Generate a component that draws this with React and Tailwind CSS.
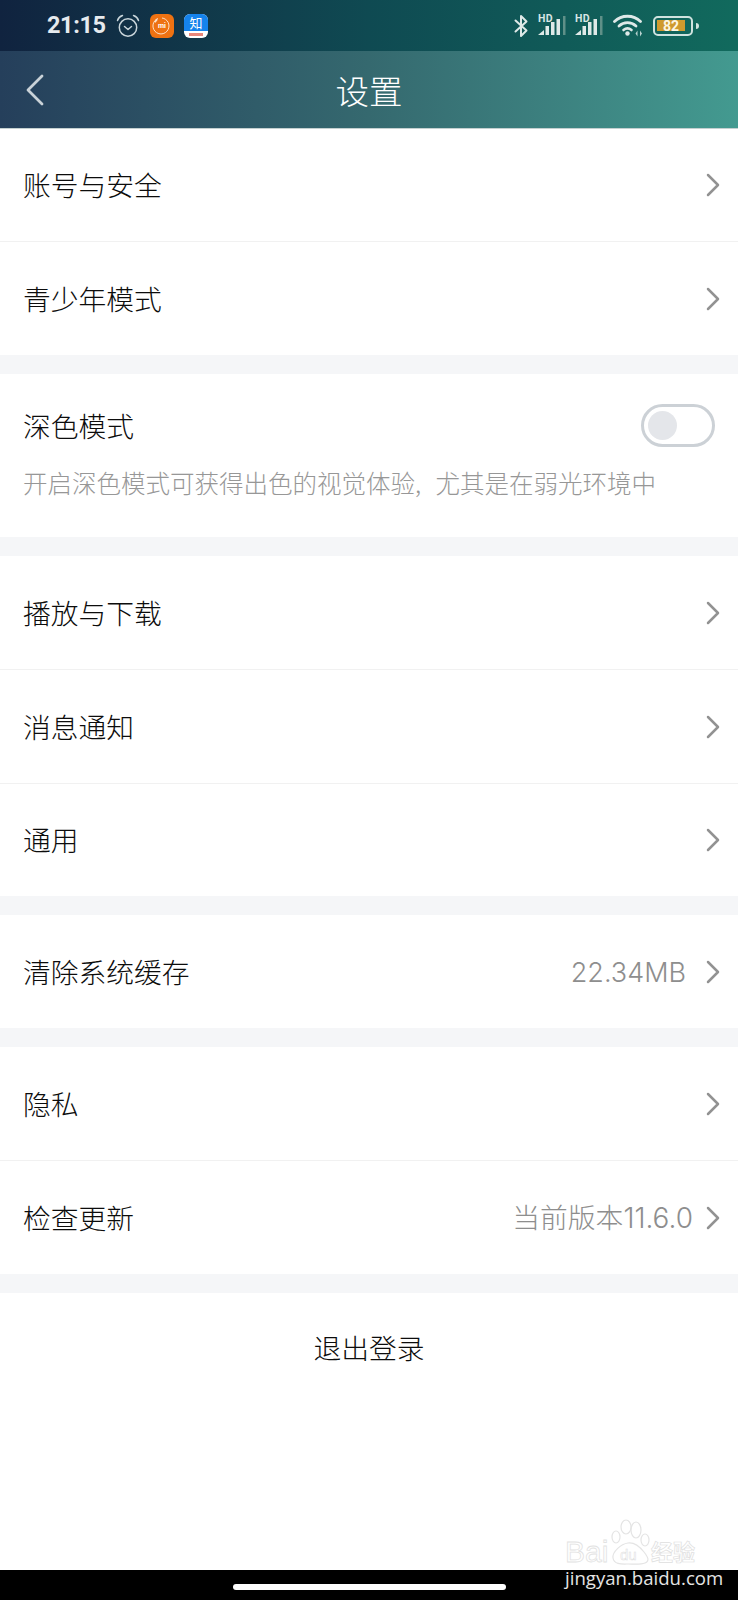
import React from 'react'

const CJK = "font-['Noto_Sans_CJK_SC','Noto_Sans',sans-serif]"
const LATIN = "font-['Inter',sans-serif] font-light"

function Chevron() {
  return (
    <svg width="14" height="24" viewBox="0 0 14 24" fill="none" className="shrink-0">
      <path d="M2 2l10 10L2 22" stroke="#929292" strokeWidth="2.500" strokeLinecap="round" strokeLinejoin="round" />
    </svg>
  )
}

function Row({ label, value, last, className = 'h-[113px]' }) {
  return (
    <div className={`box-content flex items-center pl-[23px] pr-[18px] ${className} ${last ? '' : 'border-b border-[#f1f1f1]'}`}>
      <span className="text-[27.75px] text-[#0c0c0c] leading-none font-light">{label}</span>
      <span className="ml-auto flex items-center gap-[13px]">
        {value && <span className="text-[27.75px] text-[#8e8e8e] leading-none font-light">{value}</span>}
        <Chevron />
      </span>
    </div>
  )
}

function Gap() {
  return <div className="h-[19px] bg-[#f5f6f8]" />
}

function Signal() {
  return (
    <div className="relative w-[28px] h-[23px]">
      <span className="absolute left-0 top-0 text-[10.5px] leading-none font-bold tracking-[0.4px] text-[#d7e5e4] font-['Roboto',sans-serif]">HD</span>
      <svg width="28" height="23" viewBox="0 0 28 23" className="absolute left-0 top-0">
        <path d="M0 21l6-5v5z" fill="#dfe9e8" />
        <rect x="7.500" y="12" width="3.500" height="9" fill="#dfe9e8" />
        <rect x="13" y="8" width="3.500" height="13" fill="#dfe9e8" />
        <rect x="18.500" y="5" width="3.500" height="16" fill="#dfe9e8" />
        <rect x="25" y="2" width="2.500" height="19" fill="#5f9088" />
      </svg>
    </div>
  )
}

function StatusBar() {
  return (
    <div className="h-[51px] flex items-center pl-[47px] pr-[39px] bg-gradient-to-r from-[#10233f] via-[#0f4a52] to-[#116a5d]">
      <span className="w-[57px] text-[23.5px] font-bold leading-none tracking-[-0.4px] text-[#e6eaee] font-['Roboto',sans-serif] mt-[1px]">21:15</span>
      {/* alarm */}
      <svg width="24" height="24" viewBox="0 0 24 24" fill="none" className="ml-[12px] mt-[1px]" stroke="#c9d5da" strokeWidth="1.500" strokeLinecap="round" strokeLinejoin="round">
        <circle cx="12" cy="13.500" r="8.700" />
        <path d="M8.500 12.500l3.500 3 3.500-3" />
        <path d="M1.500 6.500C2.300 4 4 2.300 6.500 1.500M22.500 6.500C21.700 4 20 2.300 17.500 1.500" />
      </svg>
      {/* mi app */}
      <div className="relative ml-[10px] w-[24px] h-[24px] rounded-[6px] bg-[#ee7212] flex items-center justify-center mt-[1px]">
        <svg width="20" height="20" viewBox="0 0 20 20" fill="none" className="absolute left-[2px] top-[2px]" stroke="#fde3cb" strokeWidth="1">
          <path d="M6 2.500A8 8 0 1 0 10 2" />
          <path d="M2.800 6.200L5 3.200" strokeWidth="1.800" />
        </svg>
        <span className="text-[7px] font-bold leading-none text-white font-['Roboto',sans-serif]">mi</span>
      </div>
      {/* zhihu app */}
      <div className="relative ml-[10px] w-[24px] h-[24px] rounded-[6px] overflow-hidden bg-white mt-[1px]">
        <div className="h-[17px] bg-[#1583ec] flex items-center justify-center">
          <span className={`text-[13px] leading-none text-white ${CJK}`}>知</span>
        </div>
        <span className="absolute left-[5px] top-[19px] w-[14px] h-[3px] bg-[#e8867a]" />
      </div>

      <div className="ml-auto flex items-center">
        <svg width="14" height="24" viewBox="0 0 14 24" fill="none" stroke="#dfe9e8" strokeWidth="2" strokeLinejoin="round" strokeLinecap="round">
          <path d="M1.500 6.500l11 10L7 22V2l5.500 5.500-11 10" />
        </svg>
        <div className="ml-[10px]"><Signal /></div>
        <div className="ml-[9px]"><Signal /></div>
        <svg width="31" height="24" viewBox="0 0 31 24" fill="none" className="ml-[10px]">
          <path d="M1.500 7.500C8.500 .5 20.500 .5 27.500 7.500" stroke="#dfe9e8" strokeWidth="2.800" strokeLinecap="round" />
          <path d="M6 12c4.800-4.400 12.200-4.400 17 0" stroke="#dfe9e8" strokeWidth="2.800" strokeLinecap="round" />
          <path d="M10.500 16c2.400-2 5.600-2 8 0" stroke="#dfe9e8" strokeWidth="2.600" strokeLinecap="round" />
          <circle cx="14.500" cy="19.500" r="2.200" fill="#dfe9e8" />
          <path d="M24.500 16.500l-2 3 2 3zM27 16.500l2 3-2 3z" fill="#b9d3d0" />
        </svg>
        <div className="ml-[9px] w-[40px] h-[20px] rounded-[5px] border-[2.5px] border-[#cfe3df] flex items-center pl-[2px]">
          <div className="w-[28px] h-[11px] bg-[#cf9a2e] flex items-center justify-center">
            <span className="text-[14px] font-bold leading-none text-[#fdf6e3] font-['Roboto',sans-serif]">82</span>
          </div>
        </div>
        <span className="ml-[3px] w-[3px] h-[6px] rounded-r bg-[#cfe3df]" />
      </div>
    </div>
  )
}

function NavBar() {
  return (
    <div className="relative h-[78px] flex items-center justify-center bg-gradient-to-r from-[#253f5b] via-[#35696f] to-[#439a90] border-b border-[#c4d0d0] box-border">
      <svg width="18" height="32" viewBox="0 0 18 32" fill="none" className="absolute left-[26px] top-[23px]">
        <path d="M16 2L2 16l14 14" stroke="#c9d2d8" strokeWidth="2.800" strokeLinecap="round" strokeLinejoin="round" />
      </svg>
      <span className="text-[33.5px] leading-none text-white font-light">设置</span>
    </div>
  )
}

function Toggle() {
  return (
    <div className="w-[74px] h-[43px] rounded-full border-[3px] border-[#ccd1d6] bg-white flex items-center pl-[4px] shrink-0">
      <div className="w-[29px] h-[29px] rounded-full bg-[#e4e6ea]" />
    </div>
  )
}

function Watermark() {
  return (
    <div className="absolute left-[565px] top-[1518px] w-[170px] h-[76px] pointer-events-none">
      <svg width="42" height="48" viewBox="0 0 42 48" fill="none" stroke="#e4e4e4" strokeWidth="1.200" className="absolute left-[45px] top-0">
        <ellipse cx="6" cy="19" rx="4" ry="6" />
        <ellipse cx="16" cy="9" rx="5" ry="7" />
        <ellipse cx="26" cy="12" rx="5" ry="8" />
        <ellipse cx="35" cy="22" rx="4" ry="6" />
        <path d="M3 40c-1-6 8-14 15-15s12 4 16 9 6 9 1 11-12 1-17 1-14 1-15-6z" />
      </svg>
      <span className="absolute left-0 top-[19px] text-[30px] leading-none text-white font-['Liberation_Sans',sans-serif] [-webkit-text-stroke:0.8px_#e2e2e2]">Bai</span>
      <span className="absolute left-[55px] top-[29px] text-[15px] leading-none text-white font-['Liberation_Sans',sans-serif] [-webkit-text-stroke:0.5px_#dedede]">du</span>
      <span className={`absolute left-[86px] top-[21px] text-[22px] font-bold leading-none text-white [-webkit-text-stroke:0.7px_#dedede] ${CJK}`}>经验</span>
      <span className="absolute left-0 top-[51px] text-[18.6px] leading-none text-[#e4e4e4] font-['Open_Sans',sans-serif]">jingyan.baidu.com</span>
    </div>
  )
}

export default function App() {
  return (
    <div className={`relative w-[738px] h-[1600px] flex flex-col bg-white overflow-hidden ${CJK}`}>
      <StatusBar />
      <NavBar />

      <div className="flex-1">
        <Row label="账号与安全" className="h-[112px]" />
        <Row label="青少年模式" last />
        <Gap />

        <div className="h-[163px] pl-[23px] pr-[23px] pt-[30px]">
          <div className="flex items-start justify-between">
            <span className="text-[27.75px] text-[#0c0c0c] leading-none font-light mt-[8px]">深色模式</span>
            <Toggle />
          </div>
          <div className="mt-[24px] text-[24.5px] leading-none text-[#979797] font-light whitespace-nowrap [word-spacing:9px]">开启深色模式可获得出色的视觉体验, 尤其是在弱光环境中</div>
        </div>
        <Gap />

        <Row label="播放与下载" />
        <Row label="消息通知" />
        <Row label="通用" last className="h-[112px]" />
        <Gap />

        <Row label="清除系统缓存" value={<span className={`mr-[7px] text-[27px] ${LATIN}`}>22.34MB</span>} last />
        <Gap />

        <Row label="隐私" />
        <Row label="检查更新" value={<>当前版本<span className={`text-[28px] ${LATIN}`}>11.6.0</span></>} last />
        <Gap />

        <div className="h-[109px] flex items-center justify-center">
          <span className="text-[27.75px] text-[#0c0c0c] leading-none font-light">退出登录</span>
        </div>
      </div>

      <div className="h-[30px] bg-black flex items-center justify-center">
        <div className="w-[273px] h-[6px] rounded-full bg-white mt-[3px]" />
      </div>

      <Watermark />
    </div>
  )
}
